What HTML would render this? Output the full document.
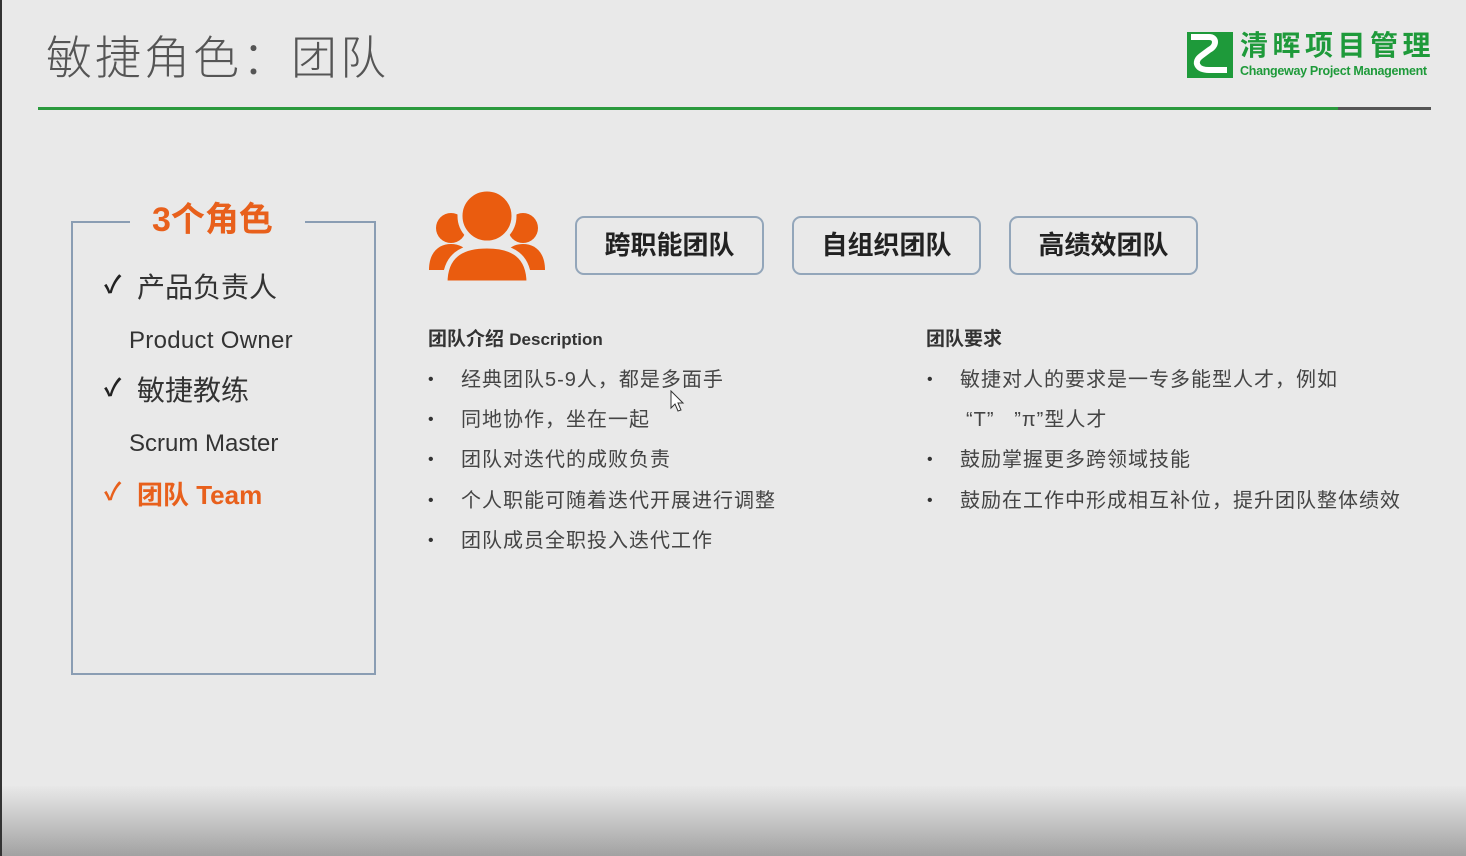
<!DOCTYPE html>
<html><head><meta charset="utf-8"><style>
*{margin:0;padding:0;box-sizing:border-box}
body{width:1466px;height:856px;overflow:hidden;background:#e9e9e9;position:relative;font-family:"Liberation Sans","Noto Sans CJK SC",sans-serif;color:#444}
.a{position:absolute;white-space:nowrap;line-height:1}
.bot{position:absolute;left:0;top:786px;width:1466px;height:70px;background:linear-gradient(#e8e8e8,#d0d0d0 35%,#a2a2a2)}
.edge{position:absolute;left:0;top:0;width:2px;height:856px;background:#333}
.btn{position:absolute;top:216px;width:189px;height:59px;border:2px solid #93a6ba;border-radius:9px;font-weight:bold;font-size:26px;color:#222;text-align:center;line-height:55px}
.li{font-size:20px;color:#444;letter-spacing:1px}
.dot{font-size:16px;color:#333}
.ck{font-size:24px;color:#222;font-weight:bold}
</style></head><body>
<div class="bot"></div><div class="edge"></div>
<div class="a" style="left:46px;top:32px;font-size:46px;color:#555;font-family:'Noto Sans CJK SC',sans-serif;font-weight:300;letter-spacing:3px">敏捷角色：团队</div>
<svg class="a" style="left:1187px;top:32px" width="46" height="46" viewBox="0 0 46 46"><rect width="46" height="46" fill="#1e9a3a"/><path d="M4 5 H22 C30 5 30 14 22 18 L14 24 C6 30 10 38 22 38 H40" stroke="#fff" stroke-width="6" fill="none"/></svg>
<div class="a" style="left:1240px;top:32px;font-size:28px;font-weight:bold;color:#1e9a3a;letter-spacing:4.5px">清晖项目管理</div>
<div class="a" style="left:1240px;top:65px;font-size:12.5px;font-weight:bold;color:#1e9a3a;letter-spacing:-0.3px">Changeway Project Management</div>
<div class="a" style="left:38px;top:107px;width:1300px;height:3px;background:#2b9a3e"></div>
<div class="a" style="left:1338px;top:107px;width:93px;height:3px;background:#555"></div>

<div class="a" style="left:71px;top:221px;width:305px;height:454px;border:2px solid #8a9db3;"></div>
<div class="a" style="left:130px;top:205px;width:175px;height:40px;background:#e9e9e9"></div>
<div class="a" style="left:152px;top:203px;font-size:34px;font-weight:bold;color:#e8601c">3个角色</div>
<div class="a ck" style="left:104px;top:274px">✓</div>
<div class="a" style="left:137px;top:274px;font-size:28px;color:#333">产品负责人</div>
<div class="a" style="left:129px;top:329px;font-size:24px;color:#333;letter-spacing:0.3px">Product Owner</div>
<div class="a ck" style="left:104px;top:377px">✓</div>
<div class="a" style="left:137px;top:377px;font-size:28px;color:#333">敏捷教练</div>
<div class="a" style="left:129px;top:432px;font-size:24px;color:#333">Scrum Master</div>
<div class="a ck" style="left:104px;top:481px;color:#e8601c">✓</div>
<div class="a" style="left:137px;top:482px;font-size:26px;color:#e8601c;font-weight:bold">团队 Team</div>

<svg class="a" style="left:427px;top:188px" width="120" height="96" viewBox="0 0 120 96">
<g fill="#ea5c0f">
<circle cx="24" cy="40" r="15"/><path d="M2 82 C2 64 12 56 24 56 C36 56 46 64 46 82 Z"/>
<circle cx="96" cy="40" r="15"/><path d="M74 82 C74 64 84 56 96 56 C108 56 118 64 118 82 Z"/>
</g>
<g fill="#ea5c0f" stroke="#e9e9e9" stroke-width="5">
<circle cx="60" cy="28" r="27"/><path d="M18 95 C18 68 34 58 60 58 C86 58 102 68 102 95 Z"/>
</g>
</svg>

<div class="btn" style="left:575px">跨职能团队</div>
<div class="btn" style="left:792px">自组织团队</div>
<div class="btn" style="left:1009px">高绩效团队</div>

<div class="a" style="left:428px;top:330px;font-size:19px;font-weight:bold;color:#333">团队介绍 <span style="font-size:17px">Description</span></div>
<div class="a dot" style="left:428px;top:372px">•</div><div class="a li" style="left:461px;top:370px">经典团队5-9人，都是多面手</div>
<div class="a dot" style="left:428px;top:412px">•</div><div class="a li" style="left:461px;top:410px">同地协作，坐在一起</div>
<div class="a dot" style="left:428px;top:452px">•</div><div class="a li" style="left:461px;top:450px">团队对迭代的成败负责</div>
<div class="a dot" style="left:428px;top:493px">•</div><div class="a li" style="left:461px;top:491px">个人职能可随着迭代开展进行调整</div>
<div class="a dot" style="left:428px;top:533px">•</div><div class="a li" style="left:461px;top:531px">团队成员全职投入迭代工作</div>

<div class="a" style="left:926px;top:330px;font-size:19px;font-weight:bold;color:#333">团队要求</div>
<div class="a dot" style="left:927px;top:372px">•</div><div class="a li" style="left:960px;top:370px">敏捷对人的要求是一专多能型人才，例如</div>
<div class="a li" style="left:966px;top:410px">“T”&nbsp;&nbsp;&nbsp;”π”型人才</div>
<div class="a dot" style="left:927px;top:452px">•</div><div class="a li" style="left:960px;top:450px">鼓励掌握更多跨领域技能</div>
<div class="a dot" style="left:927px;top:493px">•</div><div class="a li" style="left:960px;top:491px">鼓励在工作中形成相互补位，提升团队整体绩效</div>

<svg class="a" style="left:670px;top:390px" width="16" height="24" viewBox="0 0 16 24"><path d="M1 1 L1 18 L5 14 L8 21 L11 20 L8 13 L13 13 Z" fill="#fff" stroke="#333" stroke-width="1"/></svg>
</body></html>
